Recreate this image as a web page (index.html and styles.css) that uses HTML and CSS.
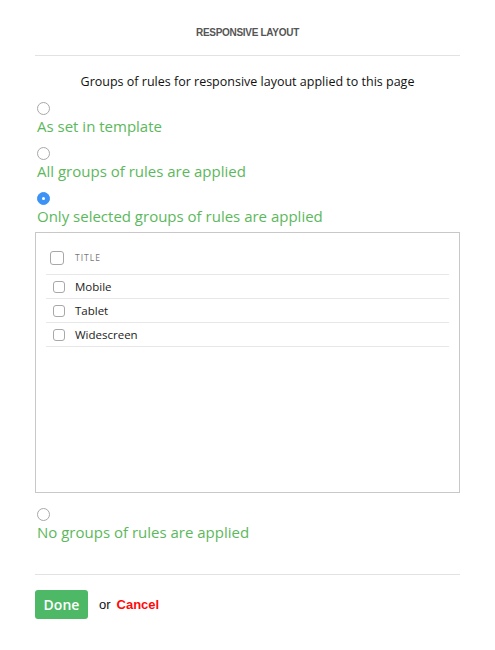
FILE: index.html
```html
<!DOCTYPE html>
<html>
<head>
<meta charset="utf-8">
<link rel="stylesheet" href="styles.css">
</head>
<body>
<div class="page">
  <div class="title">RESPONSIVE LAYOUT</div>
  <p class="intro">Groups of rules for responsive layout applied to this page</p>

  <div class="option">
    <span class="radio"></span>
    <div class="label">As set in template</div>
  </div>
  <div class="option">
    <span class="radio"></span>
    <div class="label">All groups of rules are applied</div>
  </div>
  <div class="option">
    <span class="radio checked"></span>
    <div class="label">Only selected groups of rules are applied</div>
  </div>

  <div class="box">
    <div class="grid">
      <div class="row head">
        <div class="cell-check"><span class="check big"></span></div>
        <div class="head-text">TITLE</div>
      </div>
      <div class="row">
        <div class="cell-check"><span class="check"></span></div>
        <div class="row-text">Mobile</div>
      </div>
      <div class="row">
        <div class="cell-check"><span class="check"></span></div>
        <div class="row-text">Tablet</div>
      </div>
      <div class="row">
        <div class="cell-check"><span class="check"></span></div>
        <div class="row-text">Widescreen</div>
      </div>
    </div>
  </div>

  <div class="option last">
    <span class="radio"></span>
    <div class="label">No groups of rules are applied</div>
  </div>

  <div class="footer">
    <button class="done">Done</button>
    <span class="or">or</span>
    <a class="cancel">Cancel</a>
  </div>
</div>
</body>
</html>
```
FILE: styles.css
```css
html, body {
  margin: 0;
  padding: 0;
  background: #fff;
}
body {
  font-family: "Open Sans", "Liberation Sans", sans-serif;
  color: #111;
}
.page {
  padding: 0 35px;
}
.title {
  padding-top: 27px;
  padding-bottom: 16px;
  line-height: 12px;
  height: 12px;
  text-align: center;
  font-family: "Liberation Sans", Arial, sans-serif;
  font-weight: bold;
  font-size: 10px;
  letter-spacing: -0.3px;
  color: #555;
  border-bottom: 1px solid #e2e2e2;
}
.intro {
  margin: 17px 0 0;
  line-height: 18px;
  font-size: 12.5px;
  text-align: center;
  color: #111;
}
.option {
  margin-top: 11px;
  display: flex;
  flex-direction: column;
  align-items: flex-start;
}
.option.last {
  margin-top: 15px;
}
.radio {
  display: block;
  box-sizing: border-box;
  width: 13px;
  height: 13px;
  margin-left: 2px;
  border-radius: 50%;
  border: 1px solid #a8a8a8;
  background: #fff;
  position: relative;
}
.radio.checked {
  background: #3d93f5;
  border-color: #3d93f5;
}
.radio.checked::after {
  content: "";
  position: absolute;
  left: 4px;
  top: 4px;
  width: 3px;
  height: 3px;
  border-radius: 50%;
  background: #fff;
}
.label {
  margin-top: 1px;
  line-height: 20px;
  font-size: 15px;
  color: #5cb85c;
  padding-left: 2px;
}
.box {
  margin-top: 6px;
  box-sizing: border-box;
  height: 261px;
  border: 1px solid #c8c8c8;
  padding: 8px 10px 0;
}
.row {
  display: flex;
  align-items: center;
  height: 23px;
  border-bottom: 1px solid #e8e8e8;
}
.row.head {
  height: 33px;
}
.cell-check {
  width: 29px;
  display: flex;
  align-items: center;
  padding-left: 7px;
  box-sizing: border-box;
}
.check {
  display: block;
  box-sizing: border-box;
  width: 12px;
  height: 12px;
  border: 1px solid #a8a8a8;
  border-radius: 3px;
  background: #fff;
}
.check.big {
  width: 14px;
  height: 14px;
  margin-left: -3px;
}
.head-text {
  font-size: 8.5px;
  letter-spacing: 1px;
  color: #777;
}
.row-text {
  font-size: 11.5px;
  color: #222;
}
.footer {
  margin-top: 32px;
  border-top: 1px solid #e2e2e2;
  padding-top: 15px;
  display: flex;
  align-items: center;
}
.done {
  width: 53px;
  height: 29px;
  border: none;
  border-radius: 3px;
  background: #4db866;
  color: #fff;
  font-family: "Open Sans", "Liberation Sans", sans-serif;
  font-weight: 600;
  font-size: 14px;
  padding: 0;
}
.or {
  margin-left: 11px;
  font-size: 13px;
  font-family: "Liberation Sans", Arial, sans-serif;
  color: #111;
}
.cancel {
  margin-left: 6px;
  font-family: "Liberation Sans", Arial, sans-serif;
  font-weight: bold;
  font-size: 13px;
  color: #ff0a0a;
}
```
